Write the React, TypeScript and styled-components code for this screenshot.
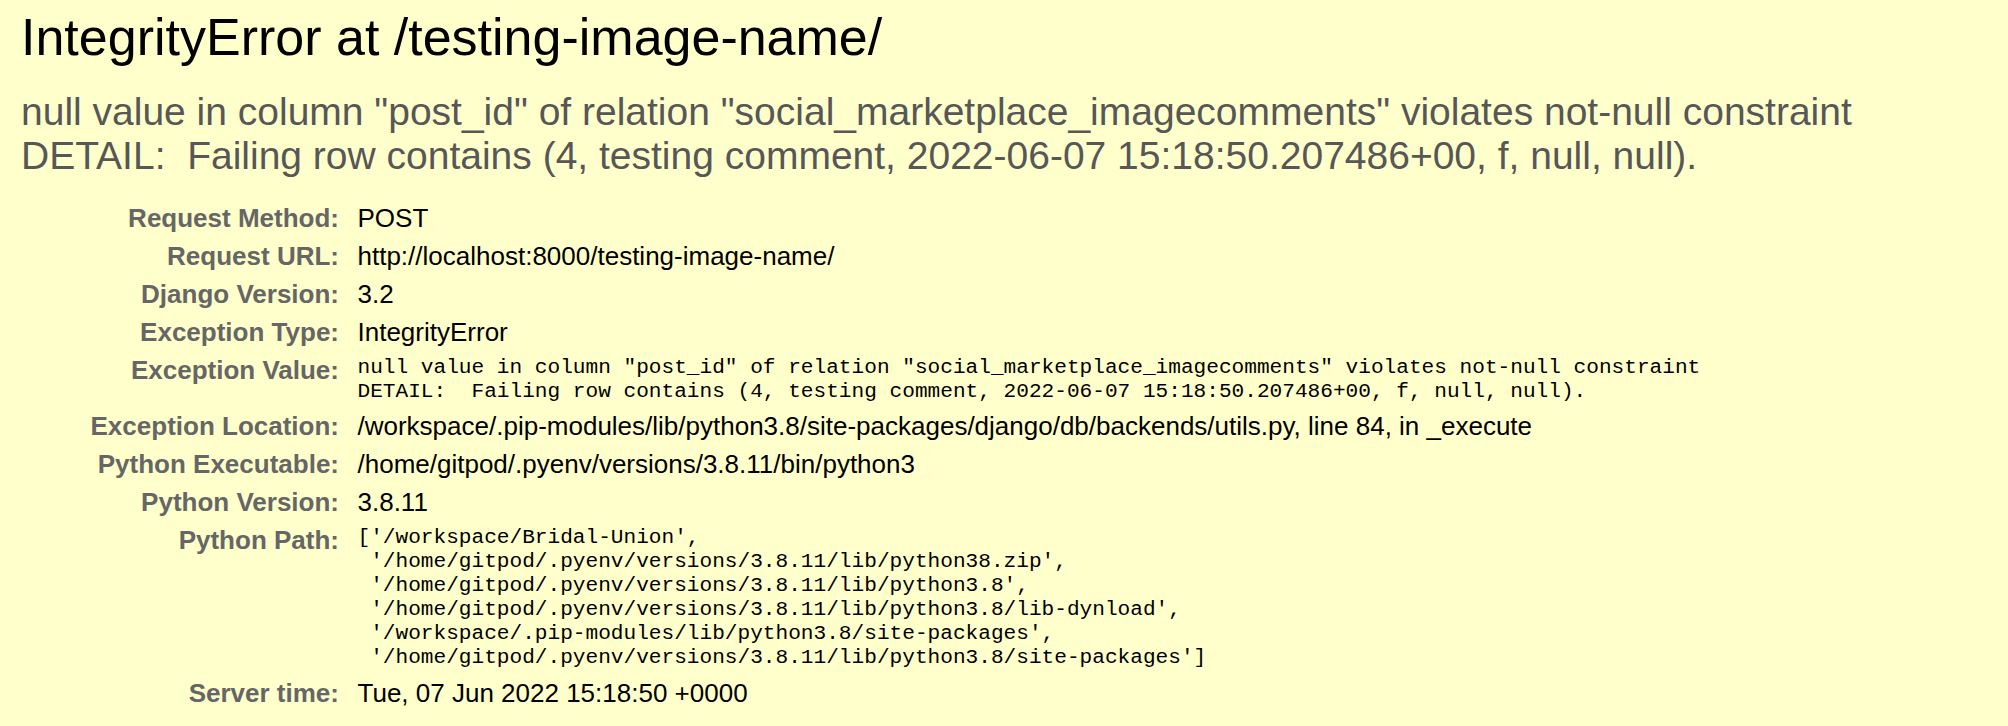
import React from "react";
import styled, { createGlobalStyle } from "styled-components";

const GlobalStyle = createGlobalStyle`
  html, body {
    margin: 0;
    padding: 0;
    background: #ffffcc;
  }
  body {
    font-family: "Liberation Sans", Arial, sans-serif;
    color: #000;
  }
`;

const Summary = styled.div`
  background: #ffffcc;
  padding: 7px 20px 20px 21px;
  min-height: 726px;
  box-sizing: border-box;
`;

const Title = styled.h1`
  margin: 0;
  font-family: "Liberation Sans", Arial, sans-serif;
  font-size: 52px;
  font-weight: normal;
  line-height: normal;
  color: #000;
`;

const ExceptionValue = styled.pre`
  margin: 22.5px 0 22.5px;
  font-family: "Liberation Sans", Arial, sans-serif;
  font-size: 39px;
  line-height: normal;
  color: #575757;
  white-space: pre-wrap;
`;

const Meta = styled.div`
  display: grid;
  grid-template-columns: 318px 1fr;
  column-gap: 18.5px;
  align-items: start;
`;

const Label = styled.div`
  padding: 4px 0;
  text-align: right;
  font-family: "Liberation Sans", Arial, sans-serif;
  font-size: 26px;
  font-weight: bold;
  line-height: 29.9px;
  color: #666;
  white-space: nowrap;
`;

const Value = styled.div`
  padding: 4px 0;
  font-family: "Liberation Sans", Arial, sans-serif;
  font-size: 26px;
  line-height: 29.9px;
  color: #000;
  white-space: nowrap;
`;

const Mono = styled.pre`
  margin: 0;
  padding-bottom: 1px;
  font-family: "Liberation Mono", "Courier New", monospace;
  font-size: 21.125px;
  line-height: 23.9px;
  color: #000;
  white-space: pre;
`;

const exceptionText =
  'null value in column "post_id" of relation "social_marketplace_imagecomments" violates not-null constraint\nDETAIL:  Failing row contains (4, testing comment, 2022-06-07 15:18:50.207486+00, f, null, null).';

const pythonPath = [
  "['/workspace/Bridal-Union',",
  " '/home/gitpod/.pyenv/versions/3.8.11/lib/python38.zip',",
  " '/home/gitpod/.pyenv/versions/3.8.11/lib/python3.8',",
  " '/home/gitpod/.pyenv/versions/3.8.11/lib/python3.8/lib-dynload',",
  " '/workspace/.pip-modules/lib/python3.8/site-packages',",
  " '/home/gitpod/.pyenv/versions/3.8.11/lib/python3.8/site-packages']",
].join("\n");

type Row = { label: string; value: string; mono?: boolean };

const rows: Row[] = [
  { label: "Request Method:", value: "POST" },
  { label: "Request URL:", value: "http://localhost:8000/testing-image-name/" },
  { label: "Django Version:", value: "3.2" },
  { label: "Exception Type:", value: "IntegrityError" },
  { label: "Exception Value:", value: exceptionText, mono: true },
  {
    label: "Exception Location:",
    value:
      "/workspace/.pip-modules/lib/python3.8/site-packages/django/db/backends/utils.py, line 84, in _execute",
  },
  { label: "Python Executable:", value: "/home/gitpod/.pyenv/versions/3.8.11/bin/python3" },
  { label: "Python Version:", value: "3.8.11" },
  { label: "Python Path:", value: pythonPath, mono: true },
  { label: "Server time:", value: "Tue, 07 Jun 2022 15:18:50 +0000" },
];

export default function App() {
  return (
    <>
      <GlobalStyle />
      <Summary>
        <Title>IntegrityError at /testing-image-name/</Title>
        <ExceptionValue>{exceptionText}</ExceptionValue>
        <Meta>
          {rows.map((r) => (
            <React.Fragment key={r.label}>
              <Label>{r.label}</Label>
              <Value>{r.mono ? <Mono>{r.value}</Mono> : r.value}</Value>
            </React.Fragment>
          ))}
        </Meta>
      </Summary>
    </>
  );
}
